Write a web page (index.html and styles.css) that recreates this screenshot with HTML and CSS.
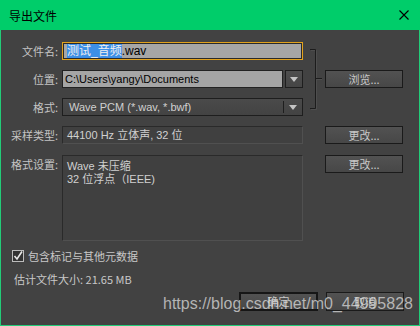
FILE: index.html
```html
<!DOCTYPE html>
<html lang="zh-CN">
<head>
    <meta charset="UTF-8">
    <title>导出文件</title>
    <link rel="stylesheet" href="styles.css">
</head>
<body>
    <div class="window">
        <div class="titlebar">
            <span class="title">导出文件</span>
            <svg class="close" width="10" height="10" viewBox="0 0 10 10">
                <path d="M0.5 0.5 L9.5 9.5 M9.5 0.5 L0.5 9.5" stroke="#000" stroke-width="1.1" fill="none"/>
            </svg>
        </div>
        <div class="content">
            <div class="form">
                <div class="label r1">文件名:</div>
                <div class="field name r1"><span class="sel">测试_音频</span>.wav</div>

                <div class="label r2">位置:</div>
                <div class="combo r2">
                    <div class="field path">C:\Users\yangy\Documents</div>
                    <div class="drop"><span class="arrow"></span></div>
                </div>

                <div class="label r3">格式:</div>
                <div class="select r3">
                    <span class="select-text">Wave PCM (*.wav, *.bwf)</span>
                    <span class="select-btn"><span class="arrow"></span></span>
                </div>

                <svg class="bracket" width="22" height="74" viewBox="0 0 22 74">
                    <path d="M8 8.5 H13.5 V67.5 H8 M13.5 37.5 H19" stroke="#4e4e4e" stroke-width="1" fill="none"/>
                    <path d="M7 7.5 H12.5 V66.5 H7 M12.5 36.5 H19" stroke="#1c1c1c" stroke-width="1" fill="none"/>
                </svg>
                <button class="btn r2b">浏览...</button>

                <div class="label r4">采样类型:</div>
                <div class="field plain r4">44100 Hz 立体声, 32 位</div>
                <button class="btn r4b">更改...</button>

                <div class="label top r5">格式设置:</div>
                <div class="field plain box r5">Wave 未压缩<br>32 位浮点（IEEE)</div>
                <button class="btn r5b">更改...</button>
            </div>

            <label class="check">
                <span class="checkbox">
                    <svg width="12" height="12" viewBox="0 0 12 12">
                        <path d="M2.5 6 L5 9 L10 1.5" stroke="#e8e8e8" stroke-width="1.6" fill="none"/>
                    </svg>
                </span>
                包含标记与其他元数据
            </label>

            <div class="estimate">估计文件大小: 21.65 MB</div>

            <div class="actions">
                <button class="btn wide default">确定</button>
                <button class="btn wide">取消</button>
            </div>

            <div class="watermark">https://blog.csdn.net/m0_44995828</div>
        </div>
    </div>
</body>
</html>
```

FILE: styles.css
```css
body {
    margin: 0;
    background-color: #424242;
    font-family: "Liberation Sans", "Noto Sans CJK SC", sans-serif;
    font-size: 11px;
}
.window {
    width: 420px;
    height: 326px;
    box-sizing: border-box;
    border: 1px solid #22cc78;
    border-top: none;
    background-color: #424242;
    display: flex;
    flex-direction: column;
}
.titlebar {
    height: 30px;
    margin: 0 -1px;
    background-color: #00cd6a;
    display: flex;
    align-items: center;
    justify-content: space-between;
    padding: 0 11px 0 9px;
}
.title {
    font-family: "Noto Sans CJK SC", sans-serif;
    font-size: 12px;
    color: #000;
    padding-top: 1px;
}
.content {
    position: relative;
    flex: 1;
    padding: 12px 0 0 8px;
    color: #c8c8c8;
}
.form {
    display: grid;
    grid-template-columns: 53px 241px 22px 78px;
    grid-template-rows: 18px 18px 18px 18px 86px;
    row-gap: 10px;
}
.label {
    grid-column: 1;
    text-align: right;
    padding-right: 4px;
    line-height: 18px;
    white-space: nowrap;
    color: #c4c4c4;
    font-family: "Noto Sans CJK SC", sans-serif;
}
.label.top {
    line-height: 14px;
    padding-top: 2px;
}
.r1 { grid-row: 1; }
.r2 { grid-row: 2; }
.r3 { grid-row: 3; }
.r4 { grid-row: 4; }
.r5 { grid-row: 5; margin-top: 1px; }
.field,
.combo,
.select {
    grid-column: 2;
}
.field {
    box-sizing: border-box;
    height: 18px;
    line-height: 16px;
    padding: 0 4px;
    white-space: nowrap;
    overflow: hidden;
}
.field.name {
    border: 1px solid #e2a21c;
    box-shadow: inset 0 0 0 1px #2a2a2a;
    background-color: #a6a6a6;
    color: #000;
    font-size: 12px;
}
.sel {
    background-color: #3d8fe6;
    color: #f0f0f0;
}
.combo {
    display: flex;
    gap: 2px;
}
.field.path {
    flex: 1;
    border: 1px solid #222;
    background-color: #a5a5a5;
    color: #000;
    padding-left: 2px;
}
.drop {
    width: 18px;
    height: 18px;
    box-sizing: border-box;
    border: 1px solid #1e1e1e;
    background: linear-gradient(#4e4e4e, #454545);
    display: flex;
    align-items: center;
    justify-content: center;
}
.arrow {
    width: 0;
    height: 0;
    border-left: 4px solid transparent;
    border-right: 4px solid transparent;
    border-top: 5px solid #c4c4c4;
}
.select {
    box-sizing: border-box;
    height: 18px;
    border: 1px solid #1e1e1e;
    background: linear-gradient(#4a4a4a, #434343);
    display: flex;
    align-items: center;
    color: #d0d0d0;
}
.select-text {
    flex: 1;
    padding-left: 6px;
    white-space: nowrap;
}
.select-btn {
    width: 18px;
    height: 12px;
    border-left: 1px solid #1e1e1e;
    display: flex;
    align-items: center;
    justify-content: center;
}
.field.plain {
    border: 1px solid #2a2a2a;
    border-right-color: #505050;
    border-bottom-color: #505050;
    background-color: #404040;
    color: #d0d0d0;
}
.field.box {
    height: 86px;
    line-height: 13px;
    padding-top: 4px;
    white-space: normal;
}
.bracket {
    grid-column: 3;
    grid-row: 1 / 4;
}
.btn {
    grid-column: 4;
    width: 78px;
    box-sizing: border-box;
    height: 18px;
    margin: 0;
    padding: 0;
    border: 1px solid #1a1a1a;
    background: linear-gradient(#525252, #474747);
    color: #c8c8c8;
    font-family: "Noto Sans CJK SC", sans-serif;
    font-size: 11px;
    line-height: 16px;
}
.r2b { grid-row: 2; }
.r4b { grid-row: 4; }
.r5b { grid-row: 5; margin-top: 1px; }
.check {
    display: flex;
    align-items: center;
    gap: 4px;
    margin: 9px 0 0 3px;
    height: 14px;
    font-family: "Noto Sans CJK SC", sans-serif;
    color: #c8c8c8;
}
.checkbox {
    width: 12px;
    height: 12px;
    box-sizing: border-box;
    border: 1px solid #bcbcbc;
    background-color: #333;
    display: flex;
}
.checkbox svg {
    margin: -1px;
}
.estimate {
    margin: 8px 0 0 5px;
    line-height: 16px;
    font-family: "Noto Sans CJK SC", sans-serif;
    color: #c8c8c8;
}
.actions {
    display: flex;
    justify-content: flex-end;
    gap: 8px;
    margin: 5px 15px 0 0;
}
.btn.wide {
    width: 78px;
    height: 19px;
}
.btn.default {
    width: 79px;
    border: 2px solid #161616;
    line-height: 15px;
}
.watermark {
    position: absolute;
    left: 162px;
    top: 265px;
    font-family: "Liberation Sans", sans-serif;
    font-size: 16px;
    color: rgba(214, 214, 214, 0.78);
    white-space: nowrap;
}
```
